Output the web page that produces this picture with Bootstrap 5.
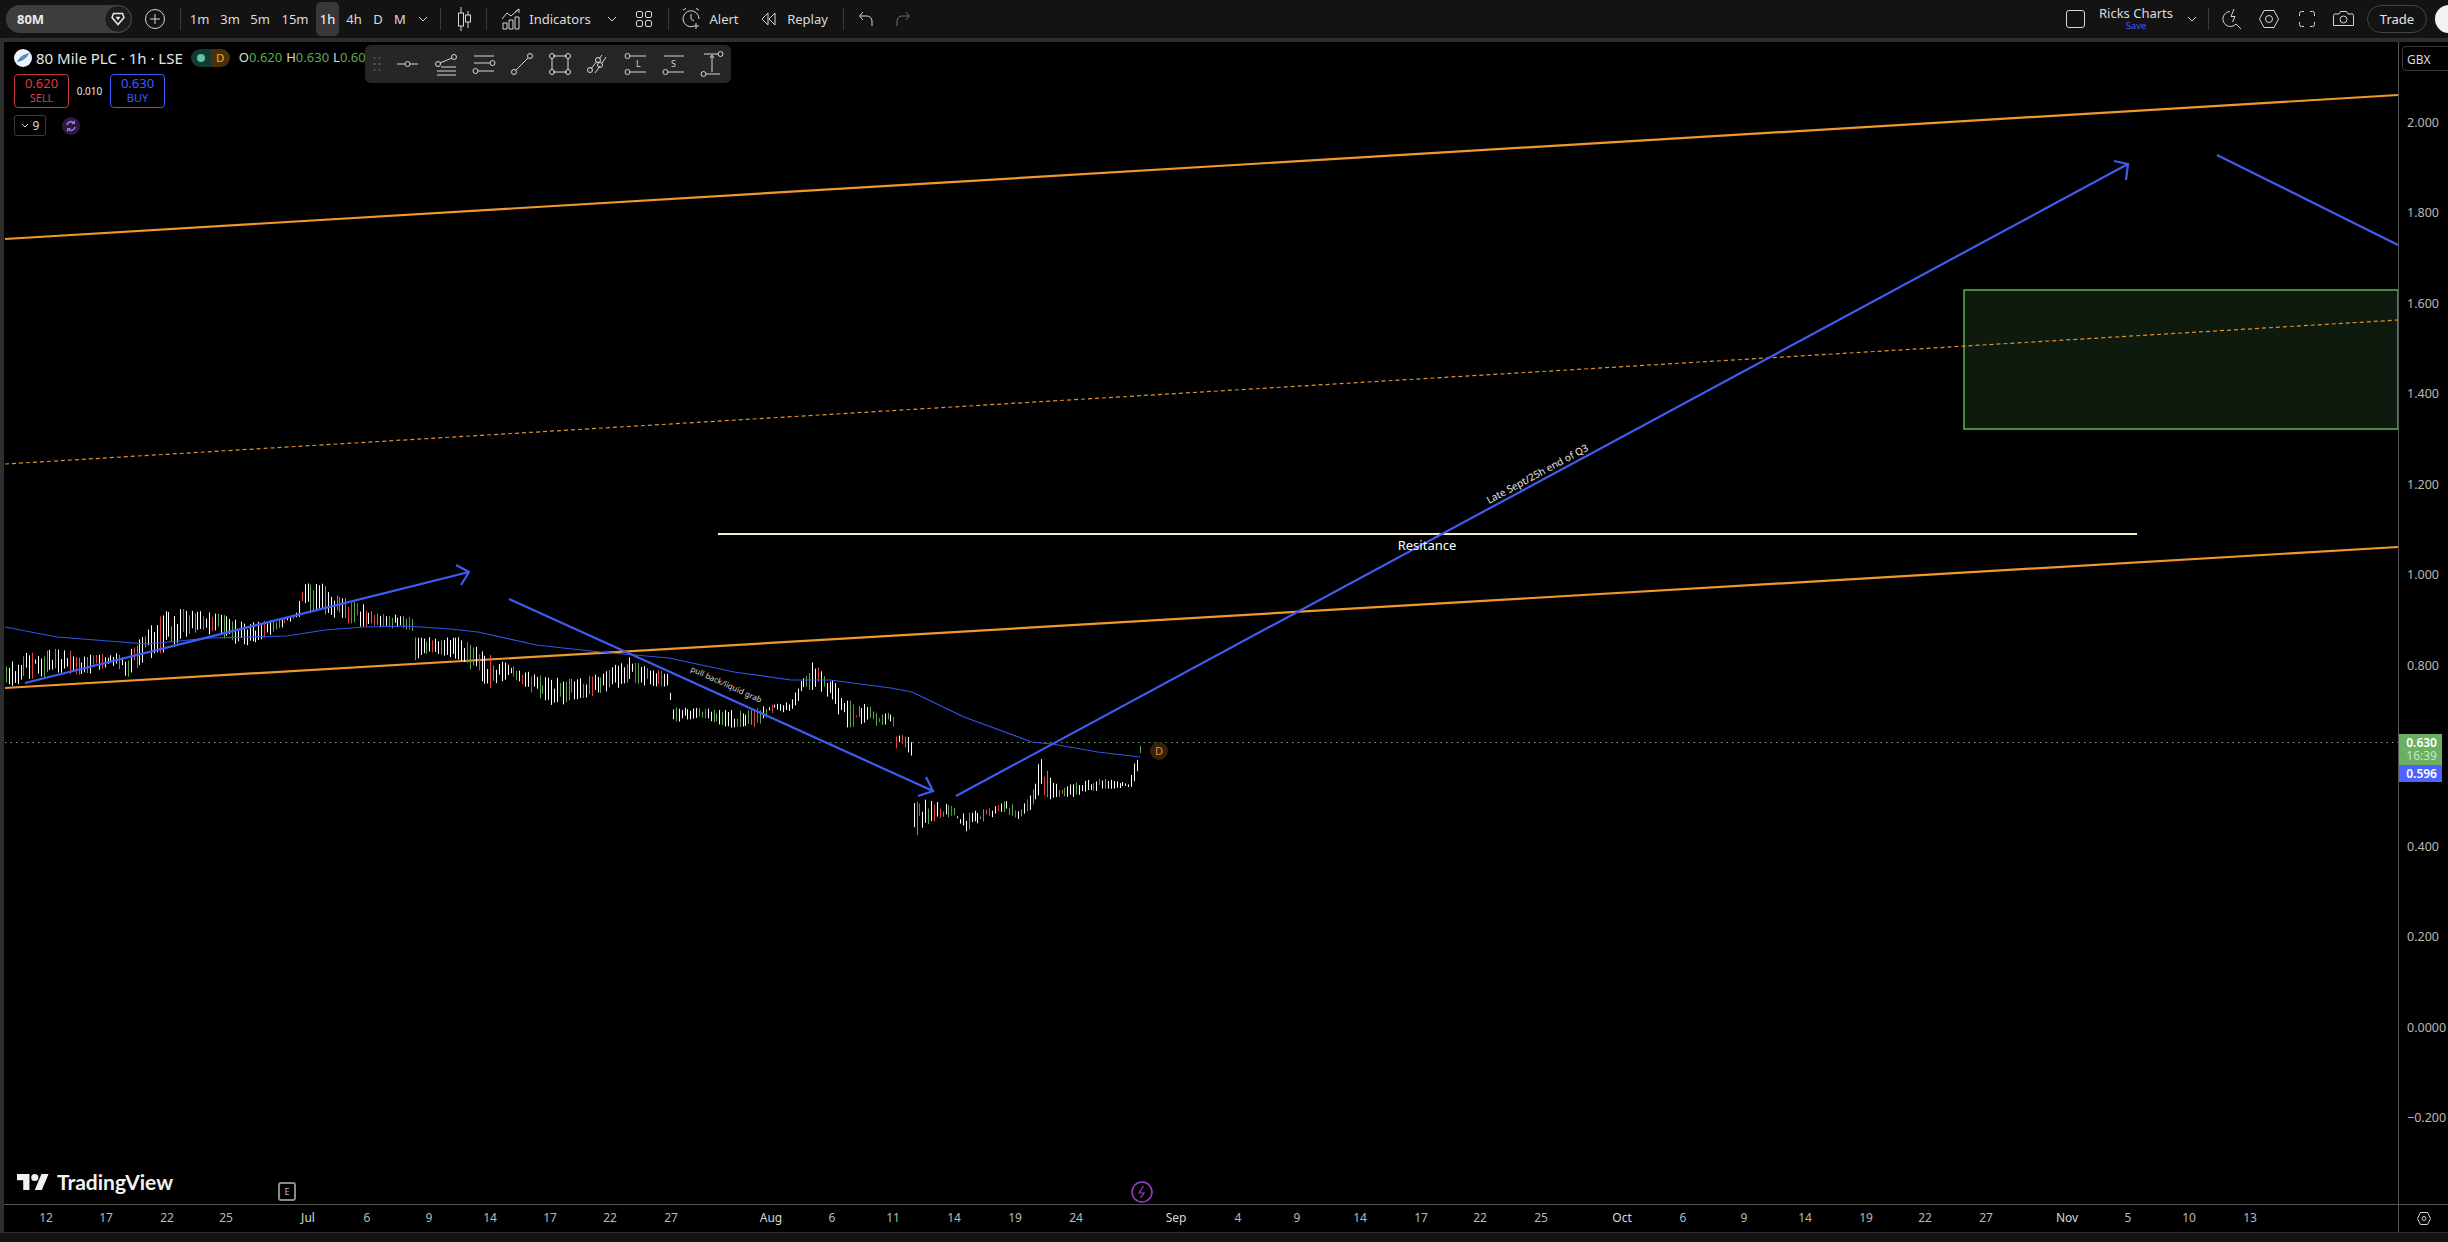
<!DOCTYPE html>
<html lang="en">
<head>
    <meta charset="UTF-8">
    <meta name="viewport" content="width=device-width, initial-scale=1.0">
    <title>80M Chart</title>
    <link href="https://cdn.jsdelivr.net/npm/bootstrap@5.3.2/dist/css/bootstrap.min.css" rel="stylesheet">
    <style>
        body { background: #131313; color: #dbdbdb; font-family: "Noto Sans", "Open Sans", sans-serif; font-size: 13px; }
        svg { display: block; flex: none; }
        .ic { fill: none; stroke: #d6d6d6; stroke-width: 1; }

        .top-bar { height: 38px; background: #131313; flex: none; overflow: hidden; }
        .strip-h { height: 4px; background: #2e2e2e; flex: none; }
        .strip-v { width: 4px; background: #2e2e2e; flex: none; }
        .tb-btn { padding: 0; border: 0; background: transparent; color: #dbdbdb; font-size: 13px; line-height: 1; height: 34px; display: flex; align-items: center; justify-content: center; flex: none; border-radius: 5px; }
        .tb-sep { width: 1px; height: 22px; background: #3a3a3a; flex: none; }
        .sym-pill { margin-left: 6px; width: 126px; height: 28px; border-radius: 14px; background: #3d3d3d; font-weight: 700; color: #e8e8e8; padding-left: 11px; }
        .sym-end { width: 28px; height: 28px; border-radius: 50%; background: #1d1d1d; border: 1px solid #4a4a4a; }
        .tf-active { background: #383838; color: #fff; }
        .layout-name { width: 78px; line-height: 1; text-align: center; }
        .layout-save { color: #3d5afe; font-size: 9.5px; margin-top: 1px; }
        .trade-btn { width: 60px; height: 28px; border: 1px solid #444; border-radius: 14px; color: #e4e4e4; font-size: 13px; }
        .user-dot { width: 28px; height: 28px; border-radius: 50%; background: #f2f2f2; flex: none; margin-right: -15px; }

        .chart-body { min-height: 0; }
        .chart-pane { width: 2394px; height: 1162px; background: #000; position: relative; overflow: hidden; flex: none; }
        .price-axis { width: 50px; background: #000; border-left: 1px solid #555; position: relative; flex: none; overflow: hidden; }
        .price-tick { position: absolute; left: 8px; font-size: 12.5px; color: #b8b8b8; line-height: 1; transform: translateY(-50%); white-space: nowrap; }
        .ccy-box { position: absolute; left: 3px; top: 4px; width: 60px; height: 25px; border: 1px solid #3a3a3a; border-radius: 4px; color: #dbdbdb; font-size: 12px; padding: 4px 0 0 4px; }
        .tag-last { position: absolute; left: 0; top: 692px; width: 43px; height: 31px; background: #6aaf62; color: #fff; font-weight: 600; font-size: 12px; line-height: 13px; text-align: right; padding: 2px 5px 0 0; }
        .tag-last span { display: block; color: #cfe5cb; font-weight: 400; }
        .tag-ma { position: absolute; left: 0; top: 723px; width: 43px; height: 17px; background: #4c63ff; color: #fff; font-weight: 600; font-size: 12px; line-height: 17px; text-align: right; padding-right: 5px; }

        .legend-box { position: absolute; left: 10px; top: 7px; }
        .legend-head { height: 18px; }
        .legend-title { font-size: 15px; color: #e6e6e6; white-space: nowrap; }
        .legend-logo { width: 18px; height: 18px; border-radius: 50%; background: #eef4fa; overflow: hidden; }
        .legend-pill { width: 39px; height: 18px; border-radius: 9px; overflow: hidden; margin-left: 8px; }
        .pill-a { background: #123a33; width: 20px; }
        .pill-b { background: #4a3108; width: 19px; color: #f5a83a; font-size: 11.5px; }
        .dot-teal { width: 8px; height: 8px; border-radius: 50%; background: #5cc4a8; }
        .ohlc { font-size: 13px; margin-left: 9px; color: #dbdbdb; white-space: nowrap; }
        .ohlc b { font-weight: 400; color: #5ca84d; margin-right: 4px; }
        .trade-box { width: 55px; height: 34px; border: 1px solid; border-radius: 4px; text-align: center; font-size: 13px; line-height: 15px; padding-top: 1px; }
        .trade-box small { display: block; font-size: 11px; line-height: 14px; }
        .box-sell { color: #e0393e; border-color: #c9383c; }
        .box-buy { color: #3d5afe; border-color: #3d5afe; }
        .spread-val { width: 41px; font-size: 10px; text-align: center; color: #e8e8e8; }
        .count-box { width: 32px; height: 21px; border: 1px solid #3d3d3d; border-radius: 3px; font-size: 12px; }
        .ind-dot { width: 18px; height: 18px; border-radius: 50%; background: #2c1a42; margin-left: 16px; }

        .draw-bar { position: absolute; left: 361px; top: 3px; width: 366px; height: 38px; background: #262626; border-radius: 6px; z-index: 3; }
        .draw-grip { width: 24px; }
        .draw-tool { width: 38px; height: 38px; }

        .tv-mark { position: absolute; left: 13px; top: 1129px; color: #f2f2f2; font-family: "Lato", sans-serif; font-weight: 700; font-size: 21px; line-height: 21px; }
        .ev-e { position: absolute; left: 274px; top: 1140px; width: 18px; height: 19px; border: 2px solid #8a8a8a; border-radius: 3px; font-size: 9px; line-height: 15px; text-align: center; color: #bdbdbd; }
        .ev-bolt { position: absolute; left: 1127px; top: 1139px; }

        .time-row { height: 28px; flex: none; background: #000; border-top: 1px solid #555; }
        .time-scale { width: 2394px; position: relative; flex: none; }
        .time-tick { position: absolute; top: 7px; font-size: 12px; line-height: 1; color: #b8b8b8; transform: translateX(-50%); }
        .time-tick.month { color: #d8d8d8; }
        .time-end { width: 50px; border-left: 1px solid #555; flex: none; }
        .page-foot { flex: 1 1 auto; background: #131313; border-top: 1px solid #2e2e2e; }
    </style>
</head>
<body class="vh-100 d-flex flex-column overflow-hidden m-0">

    <!-- Top toolbar -->
    <header class="top-bar d-flex align-items-center">
        <button class="tb-btn sym-pill justify-content-between">80M
            <span class="sym-end d-flex align-items-center justify-content-center">
                <svg width="16" height="16" viewBox="0 0 16 16" fill="none" stroke="#e8e8e8" stroke-width="1.500"><path d="M3.500 2.500h9l1.500 4L8 13.500 2 6.500z"/><path d="M6 6h4L8 9z" fill="#e8e8e8" stroke-width=".5"/></svg>
            </span>
        </button>
        <button class="tb-btn" style="width:46px">
            <svg class="ic" width="22" height="22" viewBox="0 0 22 22"><circle cx="11" cy="11" r="9.500"/><path d="M11 6v10M6 11h10"/></svg>
        </button>
        <span class="tb-sep" style="margin-left:2px"></span>
        <button class="tb-btn" style="width:37px">1m</button>
        <button class="tb-btn" style="width:24px">3m</button>
        <button class="tb-btn" style="width:36px">5m</button>
        <button class="tb-btn" style="width:34px">15m</button>
        <button class="tb-btn tf-active" style="width:23px;margin-left:4px">1h</button>
        <button class="tb-btn" style="width:30px">4h</button>
        <button class="tb-btn" style="width:18px">D</button>
        <button class="tb-btn" style="width:26px">M</button>
        <button class="tb-btn" style="width:20px">
            <svg class="ic" width="10" height="6" viewBox="0 0 10 6"><path d="M1 1l4 4 4-4"/></svg>
        </button>
        <span class="tb-sep" style="margin-left:7px"></span>
        <button class="tb-btn" style="width:45px">
            <svg class="ic" width="14" height="26" viewBox="0 0 14 26"><path d="M4 1v24M11 5v17"/><rect x="1.500" y="7" width="5" height="13" fill="#131313"/><rect x="8.500" y="9" width="5" height="7" fill="#131313"/></svg>
        </button>
        <span class="tb-sep"></span>
        <button class="tb-btn" style="margin-left:14px">
            <svg class="ic" width="20" height="22" viewBox="0 0 20 22"><path d="M1 11l5-6 4 3 8-7"/><path d="M14 4l4-3v4"/><path d="M2 15h4v6H2zM8 12h4v9H8zM14 9h4v12h-4z"/></svg>
            <span class="ms-2" style="width:62px">Indicators</span>
        </button>
        <button class="tb-btn" style="margin-left:15px;width:12px">
            <svg class="ic" width="10" height="6" viewBox="0 0 10 6"><path d="M1 1l4 4 4-4"/></svg>
        </button>
        <button class="tb-btn" style="margin-left:18px">
            <svg class="ic" width="16" height="16" viewBox="0 0 16 16"><rect x=".5" y=".5" width="6" height="6" rx="1.500"/><rect x="9.500" y=".5" width="6" height="6" rx="1.500"/><rect x=".5" y="9.500" width="6" height="6" rx="1.500"/><rect x="9.500" y="9.500" width="6" height="6" rx="1.500"/></svg>
        </button>
        <span class="tb-sep" style="margin-left:16px"></span>
        <button class="tb-btn" style="margin-left:12px">
            <svg class="ic" width="20" height="22" viewBox="0 0 20 22"><path d="M12 18.500A8 8 0 1 1 18 11"/><path d="M10 6v5l3 2M2 2L5 .5M15 .5L18 2M15 15v6M12 18h6"/></svg>
            <span style="margin-left:7px;width:32px">Alert</span>
        </button>
        <button class="tb-btn" style="margin-left:21px">
            <svg class="ic" width="16" height="14" viewBox="0 0 16 14"><path d="M7 1L1 7l6 6zM14 1L8 7l6 6z"/></svg>
            <span style="margin-left:10px;width:41px">Replay</span>
        </button>
        <span class="tb-sep" style="margin-left:15px"></span>
        <button class="tb-btn" style="margin-left:14px">
            <svg class="ic" width="16" height="16" viewBox="0 0 16 16"><path d="M5 1L1.500 5 5 9M2 5h7a5 5 0 0 1 5 5v5"/></svg>
        </button>
        <button class="tb-btn" style="margin-left:21px">
            <svg class="ic" width="16" height="16" viewBox="0 0 16 16" opacity=".45"><path d="M11 1l3.500 4L11 9M14 5H7a5 5 0 0 0-5 5v5"/></svg>
        </button>

        <div class="ms-auto d-flex align-items-center">
            <svg class="ic" width="19" height="18" viewBox="0 0 19 18"><rect x=".5" y=".5" width="18" height="17" rx="2.500"/></svg>
            <div class="layout-name" style="margin-left:12px">
                <div>Ricks Charts</div>
                <div class="layout-save">Save</div>
            </div>
            <button class="tb-btn" style="width:14px;margin-left:10px">
                <svg class="ic" width="10" height="6" viewBox="0 0 10 6"><path d="M1 1l4 4 4-4"/></svg>
            </button>
            <span class="tb-sep" style="margin-left:9px"></span>
            <button class="tb-btn" style="margin-left:13px;width:20px">
                <svg class="ic" width="20" height="22" viewBox="0 0 20 22"><path d="M14 16a7.500 7.500 0 1 1-6-12.500M14 16l5 5"/><path d="M12 1L9 8.500h4L10.500 14" /></svg>
            </button>
            <button class="tb-btn" style="margin-left:17px;width:20px">
                <svg class="ic" width="20" height="18" viewBox="0 0 20 18"><path d="M5 .5h10L19.500 9 15 17.500H5L.5 9z"/><circle cx="10" cy="9" r="3.500"/></svg>
            </button>
            <button class="tb-btn" style="margin-left:20px;width:16px">
                <svg class="ic" width="16" height="16" viewBox="0 0 16 16"><path d="M5 .5H2.500a2 2 0 0 0-2 2V5M11 .5h2.500a2 2 0 0 1 2 2V5M5 15.500H2.500a2 2 0 0 1-2-2V11M11 15.500h2.500a2 2 0 0 0 2-2V11"/></svg>
            </button>
            <button class="tb-btn" style="margin-left:18px;width:21px">
                <svg class="ic" width="21" height="16" viewBox="0 0 21 16"><path d="M2 3h4l1.500-2.500h6L15 3h4a1.500 1.500 0 0 1 1.500 1.500v10H.5v-10A1.500 1.500 0 0 1 2 3z"/><circle cx="10.500" cy="8.500" r="3.500"/></svg>
            </button>
            <button class="tb-btn trade-btn" style="margin-left:13px">Trade</button>
            <span class="user-dot ms-2"></span>
        </div>
    </header>
    <div class="strip-h"></div>

    <div class="d-flex chart-body">
        <div class="strip-v"></div>
        <div class="flex-grow-1 d-flex flex-column">
            <div class="d-flex">
                <div class="chart-pane">
                    <!-- viewBox is offset so drawing coordinates are page pixels -->
                    <svg id="chartSvg" width="2394" height="1162" viewBox="4 42 2394 1162" fill="none">
                        <rect x="1964" y="290" width="434" height="139" fill="#0d1a0d" stroke="#5cb04f" stroke-width="1.500"/>
                        <path d="M5 742.500H2398" stroke="#6aaf62" stroke-width="1" stroke-dasharray="1.500 4"/>
                        <path d="M5 464L2398 320" stroke="#e0902c" stroke-width="1.200" stroke-dasharray="4 3"/>
                        <path d="M5 239L2398 95" stroke="#f0982a" stroke-width="2.200"/>
                        <path d="M5 688L2398 547" stroke="#f0982a" stroke-width="2.200"/>
                        <g id="candles"></g>
                        <path id="maLine" stroke="#2f55e8" stroke-width="1.200"/>
                        <path d="M718 534H2137" stroke="#f7eeb8" stroke-width="2.200"/>
                        <g stroke="#3f5cf0" stroke-width="2.200">
                            <path d="M25 683L469 572M456 565L469 572 461 585"/>
                            <path d="M509 599L933 791M926 777L933 791 918 796"/>
                            <path d="M956 796L2128 164M2114 161L2128 164 2126 180"/>
                            <path d="M2217 155L2398 245"/>
                        </g>
                        <text x="1427" y="550" text-anchor="middle" fill="#fff" font-family="Noto Sans, sans-serif" font-size="13">Resitance</text>
                        <text transform="translate(1489 504) rotate(-28.300)" fill="#e8e8e8" font-family="Noto Sans, sans-serif" font-size="10">Late Sept/25h end of Q3</text>
                        <text transform="translate(690 671) rotate(24.400)" fill="#d8d8d8" font-family="Noto Sans, sans-serif" font-size="8">pull back/liquid grab</text>
                        <circle cx="1159" cy="751" r="9" fill="#33220d"/>
                        <text x="1159" y="755" text-anchor="middle" fill="#e58a1f" font-family="Noto Sans, sans-serif" font-size="11">D</text>
                    </svg>

                    <div class="legend-box">
                        <div class="legend-head d-flex align-items-center">
                            <span class="legend-logo d-flex align-items-center justify-content-center">
                                <svg width="14" height="14" viewBox="0 0 14 14"><path d="M1 11C3 6 8 3 13 2 11 7 7 10 1 11z" fill="#4a90c8"/></svg>
                            </span>
                            <span class="legend-title ms-1">80 Mile PLC · 1h · LSE</span>
                            <span class="legend-pill d-flex">
                                <span class="pill-a d-flex align-items-center justify-content-center"><span class="dot-teal"></span></span>
                                <span class="pill-b d-flex align-items-center justify-content-center">D</span>
                            </span>
                            <span class="ohlc">O<b>0.620</b>H<b>0.630</b>L<b>0.600</b></span>
                        </div>
                        <div class="d-flex align-items-center" style="margin-top:7px">
                            <div class="trade-box box-sell">0.620<small>SELL</small></div>
                            <div class="spread-val">0.010</div>
                            <div class="trade-box box-buy">0.630<small>BUY</small></div>
                        </div>
                        <div class="d-flex align-items-center" style="margin-top:7px">
                            <div class="count-box d-flex align-items-center justify-content-center gap-1">
                                <svg class="ic" width="8" height="5" viewBox="0 0 8 5"><path d="M1 1l3 3 3-3"/></svg>9
                            </div>
                            <span class="ind-dot d-flex align-items-center justify-content-center">
                                <svg width="12" height="12" viewBox="0 0 12 12" fill="none" stroke="#a97de0" stroke-width="1.500"><path d="M2 5a4 4 0 0 1 7-2M10 7a4 4 0 0 1-7 2"/><path d="M9.500 .5V3.500H6.500M2.500 11.500V8.500H5.500" stroke-width="1"/></svg>
                            </span>
                        </div>
                    </div>

                    <div class="draw-bar d-flex align-items-center" id="drawBar">
                        <span class="draw-grip d-flex justify-content-center">
                            <svg width="8" height="16" viewBox="0 0 8 16" fill="#5c5c5c"><circle cx="1.500" cy="2" r="1"/><circle cx="6.500" cy="2" r="1"/><circle cx="1.500" cy="8" r="1"/><circle cx="6.500" cy="8" r="1"/><circle cx="1.500" cy="14" r="1"/><circle cx="6.500" cy="14" r="1"/></svg>
                        </span>
                    </div>

                    <div class="tv-mark d-flex align-items-center gap-2">
                        <svg width="32" height="16" viewBox="0 4 36 18" fill="#f2f2f2"><path d="M14 22H7V11H0V4h14v18zM28 22h-8l7.500-18h8L28 22z"/><circle cx="20" cy="8" r="4"/></svg>
                        TradingView
                    </div>
                    <div class="ev-e">E</div>
                    <div class="ev-bolt">
                        <svg width="22" height="22" viewBox="0 0 22 22" fill="none" stroke="#9b3fc8" stroke-width="1.500"><circle cx="11" cy="11" r="10"/><path d="M12.500 5L8 12h5l-3.500 5" stroke-width="1.200"/></svg>
                    </div>
                </div>
                <div class="price-axis" id="priceAxis">
                    <div class="ccy-box">GBX</div>
                    <div class="tag-last">0.630<span>16:39</span></div>
                    <div class="tag-ma">0.596</div>
                </div>
            </div>
            <div class="time-row d-flex">
                <div class="time-scale" id="timeScale"></div>
                <div class="time-end d-flex align-items-center justify-content-center">
                    <svg class="ic" width="14" height="13" viewBox="0 0 14 13"><path d="M3.500.5h7L13.500 6.500l-3 6h-7l-3-6z"/><circle cx="7" cy="6.500" r="2"/></svg>
                </div>
            </div>
        </div>
    </div>
    <div class="page-foot"></div>

    <script src="https://cdn.jsdelivr.net/npm/bootstrap@5.3.2/dist/js/bootstrap.bundle.min.js"></script>
    <script>
        const SVG_NS = 'http://www.w3.org/2000/svg';

        // drawing tools in the floating bar
        const c = (x, y) => `<circle cx="${x}" cy="${y}" r="2.500"/>`;
        const drawTools = [
            `<path d="M3 14h8M16 14h8"/>${c(13.500, 14)}`,
            `<path d="M8 13l12-5"/>${c(6, 14)}${c(22, 7)}<path d="M9 17h15M5 21h19M5 25h19"/>`,
            `<path d="M4 6h20M4 13h16M8 21h16"/>${c(22.500, 13)}${c(5.500, 21)}`,
            `<path d="M8 20L20 8"/>${c(6, 22)}${c(22, 6)}`,
            `<path d="M7 6h14M7 22h14M6 8v12M22 8v12"/>${c(6, 6)}${c(22, 6)}${c(6, 22)}${c(22, 22)}`,
            `<path d="M7 19l6-8M15 9l3-4M11 23l5-7M18 13l4-6"/>${c(6, 20)}${c(14, 10)}${c(16, 15)}`,
            `<path d="M8 6h16M8 22h16"/>${c(5.500, 6)}${c(5.500, 22)}<text x="14" y="17" font-size="9" fill="#d6d6d6" stroke="none" font-family="Noto Sans, sans-serif">L</text>`,
            `<path d="M4 6h20M8 22h16"/>${c(5.500, 22)}<text x="11" y="17" font-size="9" fill="#d6d6d6" stroke="none" font-family="Noto Sans, sans-serif">S</text>`,
            `<path d="M6 4h14M8 24h14M14 6v16M12 8l2-3 2 3"/>${c(22.500, 4)}${c(5.500, 24)}`
        ];
        const drawBar = document.getElementById('drawBar');
        drawTools.forEach(inner => {
            const tool = document.createElement('span');
            tool.className = 'draw-tool d-flex align-items-center justify-content-center';
            tool.innerHTML = `<svg class="ic" width="28" height="28" viewBox="0 0 28 28">${inner}</svg>`;
            drawBar.appendChild(tool);
        });

        // price axis: y = 1027.5 - 452.5 * price, axis top is y 42
        const priceAxis = document.getElementById('priceAxis');
        ['2.000', '1.800', '1.600', '1.400', '1.200', '1.000', '0.800', '0.400', '0.200', '0.0000', '\u22120.200'].forEach(label => {
            const value = parseFloat(label.replace('\u2212', '-'));
            const tick = document.createElement('div');
            tick.className = 'price-tick';
            tick.textContent = label;
            tick.style.top = (1027.5 - 452.5 * value - 42) + 'px';
            priceAxis.appendChild(tick);
        });

        // time axis
        const timeTicks = [['12', 46], ['17', 106], ['22', 167], ['25', 226], ['Jul', 308, 1], ['6', 367], ['9', 429], ['14', 490], ['17', 550], ['22', 610], ['27', 671], ['Aug', 771, 1], ['6', 832], ['11', 893], ['14', 954], ['19', 1015], ['24', 1076], ['Sep', 1176, 1], ['4', 1238], ['9', 1297], ['14', 1360], ['17', 1421], ['22', 1480], ['25', 1541], ['Oct', 1622, 1], ['6', 1683], ['9', 1744], ['14', 1805], ['19', 1866], ['22', 1925], ['27', 1986], ['Nov', 2067, 1], ['5', 2128], ['10', 2189], ['13', 2250]];
        const timeScale = document.getElementById('timeScale');
        timeTicks.forEach(([label, x, month]) => {
            const tick = document.createElement('span');
            tick.className = 'time-tick' + (month ? ' month' : '');
            tick.textContent = label;
            tick.style.left = (x - 4) + 'px';
            timeScale.appendChild(tick);
        });

        // moving average
        const maPoints = [[5, 627], [57, 637], [147, 644], [210, 638], [287, 636], [325, 630], [364, 627], [406, 626], [450, 629], [478, 632], [536, 645], [600, 652], [669, 658], [734, 672], [791, 680], [830, 680], [891, 688], [912, 692], [964, 717], [1032, 742], [1052, 744], [1098, 752], [1140, 757]];
        document.getElementById('maLine').setAttribute('d', 'M' + maPoints.map(p => p.join(' ')).join('L'));

        // bar envelope read off the chart: x, high y, low y
        const envelope = [[5, 665, 688], [26, 652, 682], [60, 648, 673], [85, 655, 677], [110, 653, 665], [127, 653, 678], [147, 628, 660], [170, 607, 650], [190, 610, 633], [215, 612, 635], [245, 623, 648], [270, 620, 635], [298, 612, 617], [300, 580, 617], [318, 580, 612], [340, 597, 623], [353, 595, 627], [375, 613, 627], [405, 615, 630], [412, 618, 632], [413, 637, 663], [430, 637, 652], [460, 637, 660], [490, 653, 690], [510, 665, 677], [550, 677, 708], [590, 675, 697], [610, 665, 692], [630, 657, 683], [650, 670, 687], [669, 670, 688], [672, 707, 723], [700, 708, 718], [730, 710, 728], [757, 708, 727], [775, 703, 710], [790, 702, 715], [805, 672, 688], [815, 653, 693], [825, 678, 695], [835, 680, 707], [845, 700, 730], [865, 702, 723], [880, 715, 727], [893, 710, 723], [895, 733, 753], [905, 733, 750], [912, 742, 760], [914, 797, 840], [930, 798, 823], [950, 805, 817], [965, 812, 832], [990, 808, 818], [1005, 800, 813], [1020, 808, 820], [1030, 795, 810], [1040, 755, 793], [1050, 775, 800], [1060, 790, 797], [1075, 782, 797], [1100, 778, 790], [1130, 783, 787], [1133, 763, 787], [1137, 753, 773], [1141, 741, 755]];

        function envelopeAt(x) {
            for (let i = 1; i < envelope.length; i++) {
                const [x1, t1, b1] = envelope[i];
                if (x <= x1) {
                    const [x0, t0, b0] = envelope[i - 1];
                    const k = (x - x0) / (x1 - x0);
                    return [t0 + (t1 - t0) * k, b0 + (b1 - b0) * k];
                }
            }
            return envelope[envelope.length - 1].slice(1);
        }

        // small seeded generator so the bars come out the same on every run
        let seed = 80;
        function rnd() {
            seed = (seed * 1664525 + 1013904223) % 4294967296;
            return seed / 4294967296;
        }

        const bars = { white: '', green: '', red: '' };
        for (let x = 6; x <= 1141; x += 2.9) {
            const [top, bottom] = envelopeAt(x);
            const h = bottom - top;
            const a = top + rnd() * rnd() * h * 0.6;
            const b = bottom - rnd() * rnd() * h * 0.6;
            const pick = rnd();
            const bucket = pick < 0.62 ? 'white' : pick < 0.84 ? 'green' : 'red';
            // half-pixel x keeps each 1px bar sharp
            const px = Math.round(x) + 0.5;
            bars[bucket] += `M${px} ${a.toFixed(1)}V${Math.max(b, a + 2).toFixed(1)}`;
        }
        const colours = { white: '#ffffff', green: '#5ca84d', red: '#e0443e' };
        const candles = document.getElementById('candles');
        Object.keys(bars).forEach(name => {
            const path = document.createElementNS(SVG_NS, 'path');
            path.setAttribute('d', bars[name]);
            path.setAttribute('stroke', colours[name]);
            path.setAttribute('stroke-width', '1');
            candles.appendChild(path);
        });
    </script>
</body>
</html>
